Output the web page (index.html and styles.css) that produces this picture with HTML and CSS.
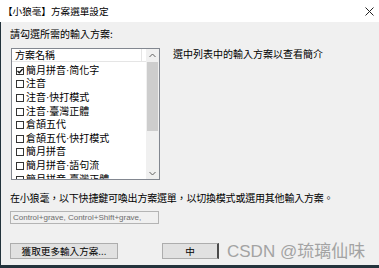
FILE: index.html
```html
<!DOCTYPE html>
<html>
<head>
<meta charset="utf-8">
<link rel="stylesheet" href="styles.css">
</head>
<body>
<div class="window">
  <div class="titlebar">
    <span class="title">【小狼毫】方案選單設定</span>
    <svg class="close" width="9" height="9" viewBox="0 0 9 9"><path d="M0.5 0.5L8.5 8.5M8.5 0.5L0.5 8.5" stroke="#222" stroke-width="1" fill="none"/></svg>
  </div>
  <div class="content">
    <div class="label">請勾選所需的輸入方案:</div>
    <div class="toprow">
      <div class="listbox">
        <div class="listmain">
          <div class="header"><div class="hcell">方案名稱</div><div class="hrest"></div></div>
          <div class="rows">
            <div class="row"><span class="cb checked"><svg width="6" height="6" viewBox="0 0 6 6"><path d="M0.5 3L2.3 4.8L5.6 1" stroke="#111" stroke-width="1.3" fill="none"/></svg></span><span>簡月拼音·简化字</span></div>
            <div class="row"><span class="cb"></span><span>注音</span></div>
            <div class="row"><span class="cb"></span><span>注音·快打模式</span></div>
            <div class="row"><span class="cb"></span><span>注音·臺灣正體</span></div>
            <div class="row"><span class="cb"></span><span>倉頡五代</span></div>
            <div class="row"><span class="cb"></span><span>倉頡五代·快打模式</span></div>
            <div class="row"><span class="cb"></span><span>簡月拼音</span></div>
            <div class="row"><span class="cb"></span><span>簡月拼音·語句流</span></div>
            <div class="row"><span class="cb"></span><span>簡月拼音·臺灣正體</span></div>
          </div>
        </div>
        <div class="scrollbar">
          <div class="arrow"><svg width="7" height="5" viewBox="0 0 7 5"><path d="M0.5 4L3.5 1L6.5 4" stroke="#606060" stroke-width="1" fill="none"/></svg></div>
          <div class="track"><div class="thumb"></div></div>
          <div class="arrow"><svg width="7" height="5" viewBox="0 0 7 5"><path d="M0.5 1L3.5 4L6.5 1" stroke="#606060" stroke-width="1" fill="none"/></svg></div>
        </div>
      </div>
      <div class="desc">選中列表中的輸入方案以查看簡介</div>
    </div>
    <div class="hint">在小狼毫，以下快捷鍵可喚出方案選單，以切換模式或選用其他輸入方案。</div>
    <div class="textbox">Control+grave, Control+Shift+grave,</div>
    <div class="buttons">
      <div class="btn btn-more">獲取更多輸入方案...</div>
      <div class="btn btn-ok">中</div>
    </div>
  </div>
</div>
<div class="watermark"><span class="wm-latin">CSDN @</span>琉璃仙味</div>
</body>
</html>
```

FILE: styles.css
```css
html, body {
  margin: 0;
  padding: 0;
}
body {
  width: 379px;
  height: 268px;
  overflow: hidden;
  background: #23333c;
  font-family: "Noto Sans CJK TC", "Noto Sans", sans-serif;
  font-size: 10px;
  color: #000;
  position: relative;
}
.window {
  margin-left: 1px;
  width: 378px;
  height: 265px;
  background: #f0f0f0;
  display: flex;
  flex-direction: column;
}
.titlebar {
  height: 22px;
  background: #fff;
  display: flex;
  align-items: center;
  justify-content: space-between;
  padding: 0 5px 1px 3px;
  box-sizing: border-box;
  margin-left: -1px;
}
.title {
  font-size: 9.6px;
  line-height: 12px;
}
.close {
  display: block;
  margin-top: 1px;
}
.content {
  padding: 6px 0 0 9px;
  display: flex;
  flex-direction: column;
}
.label {
  line-height: 12px;
  height: 12px;
}
.toprow {
  margin-top: 8px;
  display: flex;
  align-items: flex-start;
}
.listbox {
  margin-left: 1px;
  width: 149px;
  height: 132px;
  box-sizing: border-box;
  border: 1px solid #828790;
  background: #fff;
  display: flex;
  overflow: hidden;
}
.listmain {
  flex: 1;
  display: flex;
  flex-direction: column;
  overflow: hidden;
}
.header {
  height: 13px;
  box-sizing: border-box;
  border-bottom: 1px solid #e5e5e5;
  display: flex;
  flex: none;
}
.hcell {
  width: 130px;
  box-sizing: border-box;
  padding-left: 3px;
  line-height: 12px;
  border-right: 1px solid #e5e5e5;
  color: #000;
}
.hrest {
  flex: 1;
}
.rows {
  padding-top: 2px;
  font-family: "Liberation Sans", "Noto Sans CJK TC", sans-serif;
}
.row {
  height: 13.6px;
  display: flex;
  align-items: center;
  padding-left: 4px;
  line-height: 12px;
  white-space: nowrap;
}
.cb {
  width: 8px;
  height: 8px;
  box-sizing: border-box;
  border: 1px solid #333;
  background: #fff;
  margin-right: 2px;
  display: flex;
  align-items: center;
  justify-content: center;
  flex: none;
}
.cb svg {
  display: block;
}
.scrollbar {
  width: 13px;
  background: #f0f0f0;
  display: flex;
  flex-direction: column;
  flex: none;
}
.arrow {
  height: 12px;
  display: flex;
  align-items: center;
  justify-content: center;
  flex: none;
}
.track {
  flex: 1;
  padding: 1px 1px 0 1px;
}
.thumb {
  height: 69px;
  background: #cdcdcd;
}
.desc {
  margin-left: 13px;
  line-height: 12px;
}
.hint {
  margin-top: 12px;
  line-height: 12px;
  height: 12px;
  white-space: nowrap;
  letter-spacing: -0.2px;
}
.textbox {
  margin-top: 7px;
  width: 149px;
  height: 13px;
  box-sizing: border-box;
  border: 1px solid #b4b4b4;
  background: #f0f0f0;
  color: #6d6d6d;
  font-family: "Liberation Sans", "DejaVu Sans", sans-serif;
  font-size: 8px;
  line-height: 11px;
  padding-left: 2px;
  white-space: nowrap;
  overflow: hidden;
}
.buttons {
  margin-top: 19px;
  display: flex;
  gap: 44px;
}
.btn {
  height: 16px;
  box-sizing: border-box;
  border: 1px solid #adadad;
  background: #e1e1e1;
  display: flex;
  align-items: center;
  justify-content: center;
  line-height: 12px;
  font-size: 9.6px;
}
.btn-more {
  width: 108px;
}
.btn-ok {
  width: 57px;
  border-right: 2px solid #4a4a4a;
}
.watermark {
  position: absolute;
  left: 227px;
  top: 240px;
  font-size: 17px;
  line-height: 20px;
  color: #a3a3a3;
  white-space: nowrap;
}
.wm-latin {
  font-family: "Liberation Sans", "Noto Sans", sans-serif;
}
```
